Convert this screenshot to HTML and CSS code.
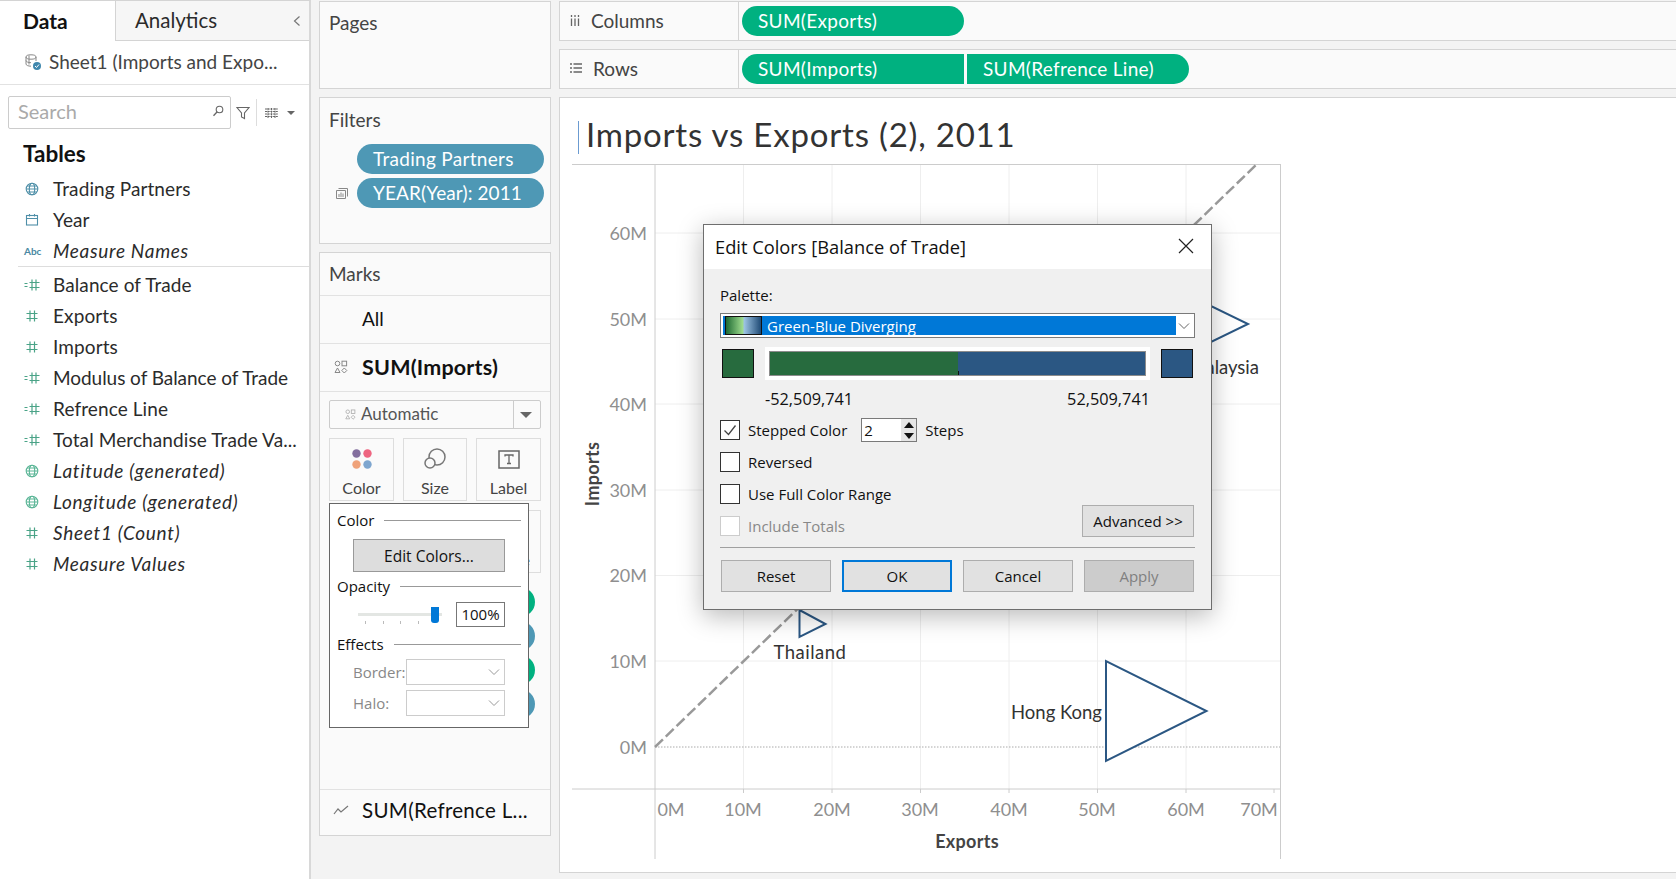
FILE: index.html
```html
<!DOCTYPE html>
<html lang="en">
  <head>
    <meta charset="UTF-8" />
    <title>Imports vs Exports (2), 2011</title>
    <link rel="stylesheet" href="styles.css">
  </head>
  <body>
    <svg class="defs" width="0" height="0">
      <symbol id="hash" viewBox="0 0 16 16">
        <path d="M6 2.500v11M10.500 2.500v11M2.500 5.500h11M2.500 10.500h11" fill="none" stroke="currentColor" stroke-width="1.200"/>
      </symbol>
      <symbol id="calchash" viewBox="0 0 16 16">
        <path d="M8 2.500v11M12 2.500v11M5.500 5.500h10M5.500 10.500h10M0.500 6.500h3M0.500 9.500h3" fill="none" stroke="currentColor" stroke-width="1.200"/>
      </symbol>
      <symbol id="globe" viewBox="0 0 16 16">
        <g fill="none" stroke="currentColor" stroke-width="1.100">
          <circle cx="8" cy="8" r="5.800"/>
          <ellipse cx="8" cy="8" rx="2.700" ry="5.800"/>
          <path d="M2.200 8h11.600M3 5h10M3 11h10"/>
        </g>
      </symbol>
      <symbol id="shapes" viewBox="0 0 14 14">
        <g fill="none" stroke="currentColor" stroke-width="1">
          <circle cx="3.500" cy="3.500" r="2.300"/>
          <rect x="8" y="1.200" width="4.600" height="4.600"/>
          <path d="M3.500 8l2.500 4.500h-5zM10.300 8l2.500 2.500-2.500 2.500-2.500-2.500z"/>
        </g>
      </symbol>
      <symbol id="chev" viewBox="0 0 12 8">
        <path d="M1 1.500l5 5 5-5" fill="none" stroke="currentColor" stroke-width="1"/>
      </symbol>
    </svg>

    <!-- data pane -->
    <aside class="data-pane">
      <div class="tabs">
        <div class="tab tab-on">Data</div>
        <div class="tab tab-off">Analytics
          <svg class="collapse" width="8" height="12" viewBox="0 0 8 12"><path d="M6.500 1.500L1.500 6l5 4.500" fill="none" stroke="#777" stroke-width="1.200"/></svg>
        </div>
      </div>
      <div class="source">
        <svg width="18" height="18" viewBox="0 0 18 18">
          <g fill="none" stroke="#888" stroke-width="1">
            <ellipse cx="7" cy="4" rx="5" ry="2.200"/>
            <path d="M2 4v7c0 1.200 2.200 2.200 5 2.200M12 4v4M2 7.500c0 1.200 2.200 2.200 5 2.200"/>
            <path d="M5 2.500v9"/>
          </g>
          <circle cx="13" cy="13" r="4" fill="#3f87ad"/>
          <path d="M11 13l1.500 1.500 2.500-3" fill="none" stroke="#fff" stroke-width="1"/>
        </svg>
        <span>Sheet1 (Imports and Expo...</span>
      </div>
      <div class="search-row">
        <div class="search">
          <span>Search</span>
          <svg width="12" height="12" viewBox="0 0 12 12"><circle cx="7.500" cy="4.500" r="3.300" fill="none" stroke="#666" stroke-width="1.100"/><path d="M5 7l-3.500 3.800" stroke="#666" stroke-width="1.300"/></svg>
        </div>
        <svg class="funnel" width="14" height="14" viewBox="0 0 14 14"><path d="M1 1.500h12L8.500 7v5.500l-3-1.500V7z" fill="none" stroke="#666" stroke-width="1.100"/></svg>
        <i class="search-sep"></i>
        <svg width="13" height="10" viewBox="0 0 13 10"><path d="M0 1h13M0 3.500h13M0 6h13M0 8.500h13M3 0v10M6.500 0v10M10 0v10" stroke="#666" stroke-width="1" stroke-dasharray="2 0.700"/></svg>
        <i class="arrow-down"></i>
      </div>
      <h2 class="tables">Tables</h2>
      <ul class="fields">
        <li><svg class="dim"><use href="#globe"/></svg>Trading Partners</li>
        <li>
          <svg class="dim" viewBox="0 0 16 16"><rect x="2.500" y="3.500" width="11" height="9.500" fill="none" stroke="currentColor" stroke-width="1.100"/><path d="M2.500 6.500h11M5.500 2v2.500M10.500 2v2.500" stroke="currentColor" stroke-width="1.100"/></svg>
          Year
        </li>
        <li class="gen"><span class="abc">Abc</span>Measure Names</li>
      </ul>
      <hr class="fields-div" />
      <ul class="fields">
        <li><svg class="mea"><use href="#calchash"/></svg>Balance of Trade</li>
        <li><svg class="mea"><use href="#hash"/></svg>Exports</li>
        <li><svg class="mea"><use href="#hash"/></svg>Imports</li>
        <li class="tight"><svg class="mea"><use href="#calchash"/></svg>Modulus of Balance of Trade</li>
        <li><svg class="mea"><use href="#calchash"/></svg>Refrence Line</li>
        <li><svg class="mea"><use href="#calchash"/></svg>Total Merchandise Trade Va...</li>
        <li class="gen"><svg class="geo"><use href="#globe"/></svg>Latitude (generated)</li>
        <li class="gen"><svg class="geo"><use href="#globe"/></svg>Longitude (generated)</li>
        <li class="gen"><svg class="mea"><use href="#hash"/></svg>Sheet1 (Count)</li>
        <li class="gen"><svg class="mea"><use href="#hash"/></svg>Measure Values</li>
      </ul>
    </aside>

    <!-- pages / filters / marks -->
    <section class="cards">
      <div class="card pages"><div class="card-title">Pages</div></div>
      <div class="card filters">
        <div class="card-title">Filters</div>
        <div class="filter-list">
          <div class="filter-row"><span class="pill pill-blue">Trading Partners</span></div>
          <div class="filter-row">
            <svg width="12" height="11" viewBox="0 0 12 11"><path d="M2.500 0.500h9v8M0.500 2.500h9v8h-9z" fill="none" stroke="#888" stroke-width="1"/><path d="M3 9V6M5 9V4.500M7 9V5.500" stroke="#888" stroke-width="1"/></svg>
            <span class="pill pill-blue pill-year">YEAR(Year): 2011</span>
          </div>
        </div>
      </div>
      <div class="card marks">
        <div class="card-title marks-title">Marks</div>
        <div class="marks-row">All</div>
        <div class="marks-row marks-sum"><svg class="shape-ic"><use href="#shapes"/></svg>SUM(Imports)</div>
        <div class="marks-body">
          <div class="mark-type">
            <svg class="shape-sm"><use href="#shapes"/></svg>
            <span>Automatic</span>
            <b class="mark-type-drop"><i class="arrow-down"></i></b>
          </div>
          <div class="mark-grid">
            <div class="mark-btn">
              <svg width="22" height="22" viewBox="0 0 22 22">
                <circle cx="5.500" cy="5.500" r="4.200" fill="#836f9e"/>
                <circle cx="16.500" cy="5.500" r="4.200" fill="#ee6580"/>
                <circle cx="5.500" cy="16.500" r="4.200" fill="#efa27a"/>
                <circle cx="16.500" cy="16.500" r="4.200" fill="#7ea6cf"/>
              </svg>
              Color
            </div>
            <div class="mark-btn">
              <svg width="24" height="22" viewBox="0 0 24 22"><g fill="none" stroke="#777" stroke-width="1.500"><circle cx="14" cy="9" r="8"/><circle cx="7" cy="15" r="5" fill="#fafafa"/></g></svg>
              Size
            </div>
            <div class="mark-btn">
              <svg width="22" height="20" viewBox="0 0 22 20"><rect x="1" y="1" width="20" height="17" fill="none" stroke="#666" stroke-width="1.500"/><path d="M7 6.500V5h8v1.500M11 5v8.500M9 13.500h4" fill="none" stroke="#666" stroke-width="1.300"/></svg>
              Label
            </div>
            <div class="mark-btn"></div>
            <div class="mark-btn"></div>
            <div class="mark-btn">Shape</div>
          </div>
          <div class="mark-pills">
            <span class="mark-pill pill-green"></span>
            <span class="mark-pill pill-blue"></span>
            <span class="mark-pill pill-green"></span>
            <span class="mark-pill pill-blue"></span>
          </div>
        </div>
        <div class="marks-row marks-line">
          <svg width="16" height="10" viewBox="0 0 16 10"><path d="M1 9l4-5 3 3 7-6" fill="none" stroke="#777" stroke-width="1.200"/></svg>
          SUM(Refrence L...
        </div>
      </div>
    </section>

    <!-- shelves and view -->
    <main class="main">
      <div class="shelf">
        <div class="shelf-label">
          <svg width="10" height="11" viewBox="0 0 10 11"><path d="M1.500 0v2M5 0v2M8.500 0v2M1.500 3.500V11M5 3.500V11M8.500 3.500V11" stroke="#666" stroke-width="1.300"/></svg>
          Columns
        </div>
        <div class="shelf-pills"><span class="pill pill-green shelf-pill">SUM(Exports)</span></div>
      </div>
      <div class="shelf">
        <div class="shelf-label">
          <svg width="12" height="10" viewBox="0 0 12 10"><path d="M0 1h2M3.500 1H12M0 5h2M3.500 5H12M0 9h2M3.500 9H12" stroke="#666" stroke-width="1.300"/></svg>
          Rows
        </div>
        <div class="shelf-pills">
          <span class="pill pill-green shelf-pill pill-left">SUM(Imports)</span>
          <span class="pill pill-green shelf-pill pill-right">SUM(Refrence Line)</span>
        </div>
      </div>
      <div class="view">
        <h1 class="view-title"><i class="caret"></i>Imports vs Exports (2), 2011</h1>
        <svg class="chart" width="710" height="696" viewBox="572 164 710 696">
          <path class="grid" d="M743.500 164V789M832 164V789M920.500 164V789M1009 164V789M1097.500 164V789M1186 164V789
                                M655 233H1280M655 319H1280M655 404H1280M655 490H1280M655 575.500H1280M655 661H1280"/>
          <path class="zero" d="M655 747H1280"/>
          <path class="axis" d="M572 164.500H1280M572 789H1280M655 164V859M1280.500 164V859"/>
          <path class="ticks" d="M743.500 789v4M832 789v4M920.500 789v4M1009 789v4M1097.500 789v4M1186 789v4M1274 789v4"/>
          <path class="dash" d="M655 747L1257 164"/>
          <path class="tri" d="M1106 661V761L1206.500 711Z"/>
          <path class="tri" d="M799.500 610V637L825.500 624Z"/>
          <path class="tri" d="M1170 286V362L1248 324Z"/>
          <g class="ylab">
            <text x="647" y="240">60M</text>
            <text x="647" y="326">50M</text>
            <text x="647" y="411">40M</text>
            <text x="647" y="497">30M</text>
            <text x="647" y="582">20M</text>
            <text x="647" y="668">10M</text>
            <text x="647" y="754">0M</text>
          </g>
          <g class="xlab">
            <text x="671" y="816">0M</text>
            <text x="743" y="816">10M</text>
            <text x="832" y="816">20M</text>
            <text x="920" y="816">30M</text>
            <text x="1009" y="816">40M</text>
            <text x="1097" y="816">50M</text>
            <text x="1186" y="816">60M</text>
            <text x="1259" y="816">70M</text>
          </g>
          <text class="mlab mlab-wide" x="810" y="659" text-anchor="middle">Thailand</text>
          <text class="mlab" x="1102" y="719" text-anchor="end">Hong Kong</text>
          <text class="mlab" x="1259" y="374" text-anchor="end">Malaysia</text>
          <text class="axis-name" x="967" y="848" text-anchor="middle">Exports</text>
          <text class="axis-name" transform="translate(599 474) rotate(-90)" text-anchor="middle">Imports</text>
        </svg>
      </div>
    </main>

    <!-- color popup -->
    <div class="popup">
      <div class="pop-head pop-head-first">Color<i></i></div>
      <button class="edit-colors">Edit Colors...</button>
      <div class="pop-head">Opacity<i></i></div>
      <div class="opacity">
        <div class="slider">
          <i class="slider-track"></i>
          <i class="slider-thumb"></i>
          <i class="slider-ticks"></i>
        </div>
        <span class="opacity-val">100%</span>
      </div>
      <div class="pop-head">Effects<i></i></div>
      <div class="effect"><label>Border:</label><span class="effect-sel"><svg><use href="#chev"/></svg></span></div>
      <div class="effect"><label>Halo:</label><span class="effect-sel"><svg><use href="#chev"/></svg></span></div>
    </div>

    <!-- edit colors dialog -->
    <div class="dialog">
      <div class="dlg-head">
        <span>Edit Colors [Balance of Trade]</span>
        <svg width="16" height="16" viewBox="0 0 16 16"><path d="M1 1l14 14M15 1L1 15" stroke="#222" stroke-width="1.200"/></svg>
      </div>
      <div class="dlg-body">
        <div class="dlg-label">Palette:</div>
        <div class="palette">
          <div class="palette-on"><i class="palette-thumb"></i>Green-Blue Diverging</div>
          <svg><use href="#chev"/></svg>
        </div>
        <div class="ramp-row">
          <i class="swatch swatch-green"></i>
          <div class="ramp"><div class="ramp-inner"><i class="ramp-g"></i><i class="ramp-b"></i></div></div>
          <i class="swatch swatch-blue"></i>
        </div>
        <div class="ramp-vals"><span>-52,509,741</span><span>52,509,741</span></div>
        <div class="opt">
          <i class="check"><svg width="18" height="18" viewBox="0 0 18 18"><path d="M3.500 9.500l4 4 7-9" fill="none" stroke="#444" stroke-width="1.300"/></svg></i>
          Stepped Color
          <span class="spin">2<b class="spin-btns"><i class="spin-up"></i><i class="spin-dn"></i></b></span>
          Steps
        </div>
        <div class="opt"><i class="check"></i>Reversed</div>
        <div class="opt"><i class="check"></i>Use Full Color Range</div>
        <div class="opt opt-last">
          <span class="opt-off"><i class="check"></i>Include Totals</span>
          <button class="btn btn-adv">Advanced &gt;&gt;</button>
        </div>
        <hr class="dlg-div" />
        <div class="dlg-btns">
          <button class="btn">Reset</button>
          <button class="btn btn-ok">OK</button>
          <button class="btn">Cancel</button>
          <button class="btn btn-off">Apply</button>
        </div>
      </div>
    </div>
  </body>
</html>
```

FILE: styles.css
```css
* {
  box-sizing: border-box;
  padding: 0;
  margin: 0;
}
body {
  position: relative;
  display: flex;
  width: 1676px;
  height: 879px;
  overflow: hidden;
  background-color: #f3f3f3;
  font-family: Lato, "Liberation Sans", sans-serif;
  font-size: 19px;
  color: #2b2b2b;
}
ul {
  list-style: none;
}
i {
  display: block;
}
.defs {
  position: absolute;
}

/* data pane */
.data-pane {
  width: 311px;
  flex: none;
  background-color: #fff;
  border-top: 1px solid #d4d4d4;
  border-right: 2px solid #d8d8d8;
}
.tabs {
  display: flex;
  height: 40px;
}
.tab {
  line-height: 39px;
}
.tab-on {
  width: 115px;
  padding-left: 23px;
  font-size: 21px;
  font-weight: 700;
  color: #111;
}
.tab-off {
  position: relative;
  flex: 1;
  padding-left: 19px;
  background-color: #f6f6f6;
  border-left: 1px solid #d4d4d4;
  border-bottom: 1px solid #d4d4d4;
  font-size: 20.500px;
}
.collapse {
  position: absolute;
  right: 8px;
  top: 14px;
}
.source {
  display: flex;
  align-items: center;
  gap: 7px;
  height: 44px;
  padding: 0 0 2px 24px;
  border-bottom: 1px solid #e2e2e2;
  color: #444;
}
.search-row {
  display: flex;
  align-items: center;
  margin: 11px 0 0 8px;
}
.search {
  display: flex;
  align-items: center;
  justify-content: space-between;
  width: 223px;
  height: 33px;
  padding: 0 6px 3px 9px;
  border: 1px solid #ccc;
  border-radius: 2px;
  font-size: 20px;
  color: #aaa;
}
.funnel {
  margin-left: 5px;
}
.search-sep {
  width: 1px;
  height: 27px;
  margin: 0 8px 0 6px;
  background-color: #ddd;
}
.arrow-down {
  width: 0;
  height: 0;
  margin-left: 9px;
  border-left: 4px solid transparent;
  border-right: 4px solid transparent;
  border-top: 4px solid #666;
}
.tables {
  height: 32px;
  margin-top: 9px;
  padding-left: 23px;
  font-size: 22.500px;
  line-height: 32px;
  color: #111;
}
.fields {
  margin-top: 3px;
  letter-spacing: 0.1px;
}
.fields li {
  display: flex;
  align-items: center;
  height: 31px;
  white-space: nowrap;
}
.fields .tight {
  letter-spacing: -0.05px;
}
.fields svg,
.abc {
  flex: none;
  width: 16px;
  height: 16px;
  margin: 0 13px 0 24px;
}
.fields .gen {
  font-style: italic;
  letter-spacing: 0.7px;
}
.abc {
  width: 18px;
  margin: 0 11px 0 24px;
  font-size: 10px;
  font-style: normal;
  font-weight: 700;
  line-height: 16px;
  letter-spacing: 0;
  color: #4a88a2;
}
.dim {
  color: #4f8fa8;
}
.mea {
  color: #4aa387;
}
.geo {
  color: #5ab596;
}
.fields-div {
  height: 1px;
  margin: 0 0 -1px 18px;
  background-color: #ddd;
  border: 0;
}

/* cards column */
.cards {
  display: flex;
  flex-direction: column;
  gap: 8px;
  width: 232px;
  flex: none;
  margin: 1px 8px 0 8px;
}
.card {
  background-color: #fafafa;
  border: 1px solid #d4d4d4;
}
.card-title {
  padding: 10px 0 0 9px;
  line-height: 24px;
  color: #444;
}
.pages .card-title {
  padding-top: 9px;
}
.pages {
  height: 88px;
}
.filters {
  height: 147px;
}
.filter-list {
  display: flex;
  flex-direction: column;
  gap: 4px;
  margin-top: 12px;
}
.filter-row {
  display: flex;
  align-items: center;
  gap: 9px;
  padding-left: 16px;
  justify-content: flex-end;
  padding-right: 6px;
}
.pill {
  display: inline-block;
  height: 30px;
  line-height: 30px;
  padding-left: 16px;
  border-radius: 15px;
  color: #fff;
  white-space: nowrap;
  letter-spacing: 0.3px;
}
.filters .pill {
  width: 187px;
}
.filters .pill-year {
  letter-spacing: 0.1px;
}
.pill-blue {
  background-color: #4e98b5;
}
.pill-green {
  background-color: #00b180;
}
.marks {
  display: flex;
  flex-direction: column;
  height: 584px;
}
.marks-title {
  height: 43px;
  padding-top: 9px;
  border-bottom: 1px solid #e2e2e2;
}
.marks-row {
  display: flex;
  align-items: center;
  height: 48px;
  padding: 0 0 2px 42px;
  border-bottom: 1px solid #e2e2e2;
  color: #111;
}
.marks-sum {
  position: relative;
  font-size: 21.500px;
  font-weight: 700;
  letter-spacing: 0.2px;
}
.shape-ic {
  position: absolute;
  left: 14px;
  width: 14px;
  height: 14px;
  color: #888;
}
.marks-body {
  flex: 1;
  padding: 8px 9px 0 9px;
}
.mark-type {
  display: flex;
  align-items: center;
  height: 29px;
  border: 1px solid #ccc;
  border-radius: 2px;
  font-size: 17px;
  color: #555;
}
.mark-type span {
  margin-bottom: 2px;
}
.shape-sm {
  width: 11px;
  height: 11px;
  margin: 0 5px 0 15px;
  color: #aaa;
}
.mark-type-drop {
  display: flex;
  align-items: center;
  width: 27px;
  height: 100%;
  margin-left: auto;
  border-left: 1px solid #ccc;
}
.mark-type-drop .arrow-down {
  margin-left: 6px;
  border-left-width: 6px;
  border-right-width: 6px;
  border-top-width: 6px;
}
.mark-grid {
  display: grid;
  grid-template-columns: 65px 64px 65px;
  grid-auto-rows: 63px;
  gap: 9px 9px;
  margin-top: 9px;
}
.mark-btn {
  display: flex;
  flex-direction: column;
  align-items: center;
  justify-content: flex-end;
  gap: 8px;
  padding-bottom: 3px;
  border: 1px solid #ddd;
  font-size: 16px;
  color: #444;
}
.mark-pills {
  display: flex;
  flex-direction: column;
  align-items: flex-end;
  gap: 4px;
  margin: 14px 6px 0 0;
}
.mark-pill {
  display: block;
  width: 178px;
  height: 30px;
  border-radius: 15px;
}
.marks-line {
  gap: 13px;
  padding: 0 0 6px 13px;
  height: 46px;
  border-top: 1px solid #e2e2e2;
  border-bottom: 0;
  font-size: 20.500px;
  letter-spacing: 0.3px;
}

/* right side */
.main {
  display: flex;
  flex-direction: column;
  gap: 8px;
  flex: 1;
  margin-top: 1px;
  min-width: 0;
}
.shelf {
  display: flex;
  height: 40px;
  background-color: #fafafa;
  border: 1px solid #d4d4d4;
  border-right: 0;
}
.shelf-label {
  display: flex;
  align-items: center;
  gap: 11px;
  width: 179px;
  padding: 0 0 2px 10px;
  border-right: 1px solid #d4d4d4;
  color: #444;
}
.shelf-pills {
  display: flex;
  align-items: center;
  gap: 3px;
  padding-left: 3px;
}
.shelf-pill {
  width: 222px;
}
.pill-left {
  border-radius: 15px 0 0 15px;
}
.pill-right {
  border-radius: 0 15px 15px 0;
}
.view {
  height: 776px;
  background-color: #fff;
  border: 1px solid #d4d4d4;
  border-right: 0;
}
.view-title {
  position: relative;
  height: 66px;
  padding: 16px 0 0 26px;
  font-size: 33px;
  font-weight: 400;
  line-height: 40px;
  letter-spacing: 0.8px;
  color: #333;
}
.caret {
  position: absolute;
  left: 18px;
  top: 23px;
  width: 1px;
  height: 33px;
  background-color: #6b9bd1;
}
.chart {
  display: block;
  margin-left: 12px;
}
.grid {
  stroke: #eee;
  fill: none;
}
.zero {
  stroke: #aaa;
  stroke-dasharray: 1.500 1.500;
}
.axis {
  stroke: #ccc;
  fill: none;
}
.ticks {
  stroke: #ccc;
}
.dash {
  stroke: #999;
  stroke-width: 2.500;
  stroke-dasharray: 11 4;
  fill: none;
}
.tri {
  fill: #fff;
  stroke: #2b5783;
  stroke-width: 2;
}
.ylab {
  font-size: 18px;
  fill: #8f8f8f;
  text-anchor: end;
}
.xlab {
  font-size: 18px;
  fill: #8f8f8f;
  text-anchor: middle;
}
.mlab {
  font-size: 18.500px;
  fill: #333;
}
.mlab-wide {
  letter-spacing: 0.5px;
}
.axis-name {
  font-size: 18px;
  font-weight: 700;
  letter-spacing: 0.3px;
  fill: #444;
}

/* color popup */
.popup {
  position: absolute;
  left: 329px;
  top: 503px;
  width: 200px;
  height: 225px;
  padding: 0 7px;
  background-color: #fff;
  border: 1px solid #666;
  font-family: "Open Sans", "Liberation Sans", sans-serif;
  font-size: 15px;
  color: #111;
}
.pop-head {
  display: flex;
  align-items: center;
  gap: 10px;
  height: 24px;
}
.pop-head-first {
  margin-top: 4px;
}
.pop-head i {
  flex: 1;
  height: 1px;
  background-color: #999;
}
.edit-colors {
  display: block;
  width: 152px;
  height: 33px;
  margin: 7px 0 2px 16px;
  background-color: #ddd;
  border: 1px solid #999;
  font: inherit;
  font-size: 15.500px;
  color: #111;
}
.opacity {
  display: flex;
  align-items: center;
  height: 30px;
  margin-top: 1px;
}
.slider {
  position: relative;
  width: 84px;
  height: 30px;
  margin-left: 21px;
}
.slider-track {
  position: absolute;
  left: 0;
  top: 14px;
  width: 100%;
  height: 3px;
  background-color: #e3e6e3;
}
.slider-thumb {
  position: absolute;
  left: 73px;
  top: 8px;
  width: 8px;
  height: 16px;
  background-color: #0078d7;
  border-radius: 0 0 3px 3px;
}
.slider-ticks {
  position: absolute;
  left: 7px;
  top: 22px;
  width: 55px;
  height: 3px;
  background: repeating-linear-gradient(90deg, #bbb 0 1px, transparent 1px 17.500px);
}
.opacity-val {
  width: 49px;
  height: 25px;
  margin-left: 14px;
  border: 1px solid #777;
  text-align: center;
  line-height: 23px;
  font-size: 15px;
}
.opacity + .pop-head {
  margin-top: 3px;
}
.effect {
  display: flex;
  align-items: center;
  height: 26px;
  margin: 3px 0 0 16px;
  color: #888;
}
.effect + .effect {
  margin-top: 5px;
}
.effect label {
  width: 53px;
}
.effect-sel {
  display: flex;
  align-items: center;
  justify-content: flex-end;
  width: 99px;
  height: 26px;
  padding-right: 4px;
  background-color: #fff;
  border: 1px solid #ccc;
}
.effect-sel svg {
  width: 12px;
  height: 8px;
  color: #999;
}

/* edit colors dialog */
.dialog {
  position: absolute;
  left: 703px;
  top: 224px;
  width: 509px;
  height: 386px;
  display: flex;
  flex-direction: column;
  background-color: #f0f0f0;
  border: 1px solid #6e6e6e;
  box-shadow: 0 6px 24px rgba(0, 0, 0, 0.28);
  font-family: "Open Sans", "Liberation Sans", sans-serif;
  font-size: 15px;
  color: #111;
}
.dlg-head {
  display: flex;
  align-items: center;
  justify-content: space-between;
  flex: none;
  height: 44px;
  padding: 0 17px 2px 11px;
  background-color: #fff;
  font-size: 18.300px;
}
.dlg-body {
  flex: 1;
  padding: 14px 16px 0 16px;
}
.dlg-label {
  height: 24px;
  line-height: 24px;
}
.palette {
  display: flex;
  align-items: center;
  justify-content: space-between;
  width: 475px;
  height: 25px;
  margin-top: 6px;
  padding: 2px 3px 2px 2px;
  background-color: #fff;
  border: 1px solid #7a7a7a;
}
.palette svg {
  width: 12px;
  height: 8px;
  margin-right: 1px;
  color: #666;
}
.palette-on {
  display: flex;
  align-items: center;
  gap: 5px;
  width: 453px;
  height: 19px;
  padding-left: 2px;
  background-color: #0078d7;
  color: #fff;
}
.palette-thumb {
  width: 37px;
  height: 19px;
  border: 1px solid #111;
  background: linear-gradient(90deg, #1e6a33, #9fdc8e 48%, #9cc3e3 52%, #1f4a75);
}
.ramp-row {
  display: flex;
  align-items: center;
  justify-content: space-between;
  width: 471px;
  height: 33px;
  margin: 9px 0 0 2px;
}
.swatch {
  width: 32px;
  height: 29px;
  border: 1px solid #111;
}
.swatch-green {
  background-color: #276b3e;
}
.swatch-blue {
  background-color: #2b5783;
}
.ramp {
  width: 385px;
  height: 33px;
  padding: 4px;
  background-color: #fff;
}
.ramp-inner {
  display: flex;
  height: 25px;
  border: 1px solid #8c8c8c;
}
.ramp-g {
  flex: 1;
  background-color: #276b3e;
}
.ramp-b {
  flex: 1;
  background: linear-gradient(#111, #111) left bottom / 1px 4px no-repeat, #2b5783;
}
.ramp-vals {
  display: flex;
  justify-content: space-between;
  width: 385px;
  height: 24px;
  margin: 7px 0 0 45px;
  font-size: 16.300px;
  line-height: 24px;
}
.opt {
  display: flex;
  align-items: center;
  gap: 8px;
  height: 20px;
  margin-top: 9px;
}
.opt + .opt {
  margin-top: 12px;
}
.check {
  width: 20px;
  height: 20px;
  flex: none;
  background-color: #fff;
  border: 1px solid #333;
}
.spin {
  display: flex;
  align-items: center;
  justify-content: space-between;
  width: 56px;
  height: 24px;
  margin-left: 6px;
  padding-left: 2px;
  background-color: #fff;
  border: 1px solid #7a7a7a;
}
.spin-btns {
  display: flex;
  flex-direction: column;
  justify-content: space-around;
  align-items: center;
  width: 15px;
  height: 22px;
  background-color: #e6e6e6;
}
.spin-up,
.spin-dn {
  width: 0;
  height: 0;
  border-left: 5px solid transparent;
  border-right: 5px solid transparent;
}
.spin-up {
  border-bottom: 6px solid #111;
}
.spin-dn {
  border-top: 6px solid #111;
}
.opt-last {
  position: relative;
  justify-content: space-between;
}
.opt-off {
  display: flex;
  align-items: center;
  gap: 8px;
  color: #888;
}
.opt-off .check {
  border-color: #ccc;
}
.btn {
  width: 110px;
  height: 32px;
  background-color: #e1e1e1;
  border: 1px solid #adadad;
  font: inherit;
  color: #111;
}
.btn-adv {
  position: absolute;
  right: 1px;
  top: -11px;
  width: 112px;
}
.dlg-div {
  height: 1px;
  margin-top: 11px;
  background-color: #a0a0a0;
  border: 0;
}
.dlg-btns {
  display: flex;
  justify-content: space-between;
  padding: 0 1px;
  margin-top: 12px;
}
.btn-ok {
  border: 2px solid #0078d7;
}
.btn-off {
  background-color: #ccc;
  color: #808080;
}
```
